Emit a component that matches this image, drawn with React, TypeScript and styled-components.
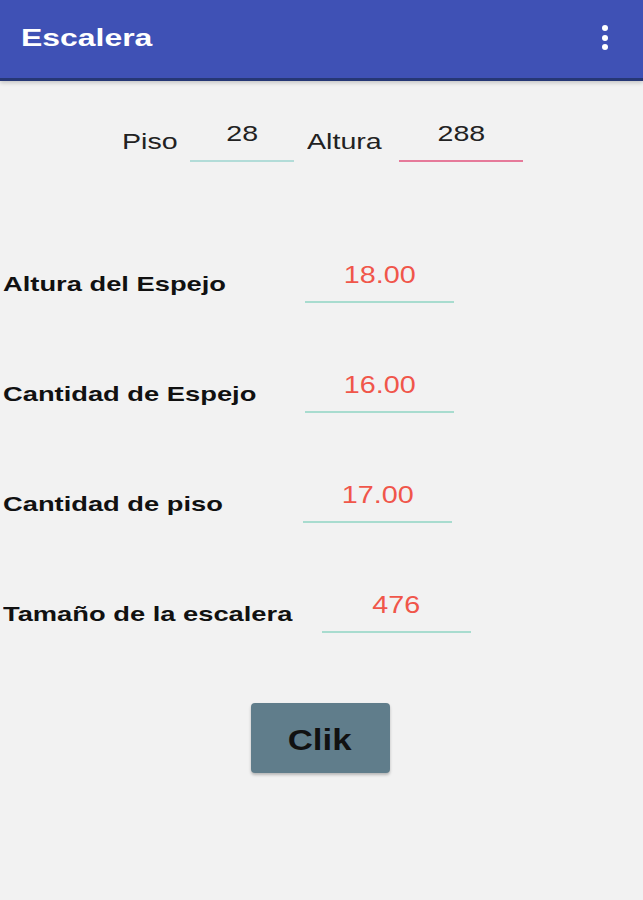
import React from 'react';
import styled, { createGlobalStyle } from 'styled-components';

const GlobalStyle = createGlobalStyle`
html, body {
margin: 0;
padding: 0;
background: #f2f2f2;
font-family: "Liberation Sans", Arial, sans-serif;
}
`;

// the reference is a phone capture stretched sideways, so text is widened
const Stretch = styled.span<{ scale: number; origin?: string }>`
display: inline-block;
white-space: nowrap;
transform: scaleX(${props => props.scale});
transform-origin: ${props => props.origin || 'left'};
`;

const Screen = styled.div`
width: 643px;
height: 900px;
background: #f2f2f2;
display: flex;
flex-direction: column;
overflow: hidden;
`;

const AppBar = styled.div`
height: 81px;
background: #3f51b5;
display: flex;
align-items: center;
justify-content: space-between;
padding: 0 0 3px 21px;
box-sizing: border-box;
border-bottom: 3px solid #263775;
box-shadow: 0 2px 4px rgb(0 0 0 / 18%);
`;

const Title = styled.div`
color: white;
font-weight: 700;
font-size: 24px;
`;

const Kebab = styled.div`
display: flex;
flex-direction: column;
gap: 3.5px;
margin-right: 35px;
span {
width: 6px;
height: 6px;
border-radius: 50%;
background: white;
}
`;

const InputRow = styled.div`
display: flex;
align-items: flex-start;
margin-top: 40px;
padding-left: 122px;
`;

const SmallLabel = styled.div<{ width: number; indent?: number }>`
width: ${props => props.width}px;
padding-left: ${props => props.indent || 0}px;
box-sizing: border-box;
font-size: 22px;
line-height: 26px;
margin-top: 8px;
color: #222;
`;

const Field = styled.div<{ width: number; line: string; color: string }>`
width: ${props => props.width}px;
height: 41px;
border-bottom: 2px solid ${props => props.line};
text-align: center;
font-size: 22px;
line-height: 26px;
color: ${props => props.color};
box-sizing: border-box;
`;

const Results = styled.div`
display: flex;
flex-direction: column;
gap: 69px;
margin-top: 100px;
padding-left: 3px;
`;

const ResultRow = styled.div<{ offset: number }>`
display: grid;
grid-template-columns: ${props => 300 + props.offset}px 149px;
align-items: start;
`;

const ResultLabel = styled.div`
font-weight: 700;
font-size: 21px;
line-height: 26px;
margin-top: 9px;
color: #111;
`;

const ValueText = styled.div`
font-size: 23px;
`;

const ButtonRow = styled.div`
display: flex;
justify-content: center;
margin-top: 70px;
padding-right: 3px;
`;

const ClikButton = styled.button`
width: 139px;
height: 70px;
background: #607d8b;
border: none;
border-radius: 4px;
box-shadow: 0 2px 3px rgb(0 0 0 / 25%);
font-family: "Liberation Sans", Arial, sans-serif;
font-weight: 700;
font-size: 29px;
color: #111;
padding: 4px 0 0;
`;

const results = [
    { label: 'Altura del Espejo', value: '18.00', offset: 2 },
    { label: 'Cantidad de Espejo', value: '16.00', offset: 2 },
    { label: 'Cantidad de piso', value: '17.00', offset: 0 },
    { label: 'Tamaño de la escalera', value: '476', offset: 19 },
];

function App() {
    return (
        <Screen>
            <GlobalStyle />
            <AppBar>
                <Title><Stretch scale={1.33}>Escalera</Stretch></Title>
                <Kebab><span /><span /><span /></Kebab>
            </AppBar>
            <InputRow>
                <SmallLabel width={68}><Stretch scale={1.3}>Piso</Stretch></SmallLabel>
                <Field width={104} line="#b2dcd8" color="#222"><Stretch scale={1.3} origin="center">28</Stretch></Field>
                <SmallLabel width={105} indent={13}><Stretch scale={1.3}>Altura</Stretch></SmallLabel>
                <Field width={124} line="#e67a9a" color="#222"><Stretch scale={1.3} origin="center">288</Stretch></Field>
            </InputRow>
            <Results>
                {results.map((r) =>
                    <ResultRow key={r.label} offset={r.offset}>
                        <ResultLabel><Stretch scale={1.3}>{r.label}</Stretch></ResultLabel>
                        <Field width={149} line="#a8dccf" color="#f0564a">
                            <ValueText><Stretch scale={1.25} origin="center">{r.value}</Stretch></ValueText>
                        </Field>
                    </ResultRow>)
                }
            </Results>
            <ButtonRow>
                <ClikButton><Stretch scale={1.2} origin="center">Clik</Stretch></ClikButton>
            </ButtonRow>
        </Screen>
    );
}

export default App;
